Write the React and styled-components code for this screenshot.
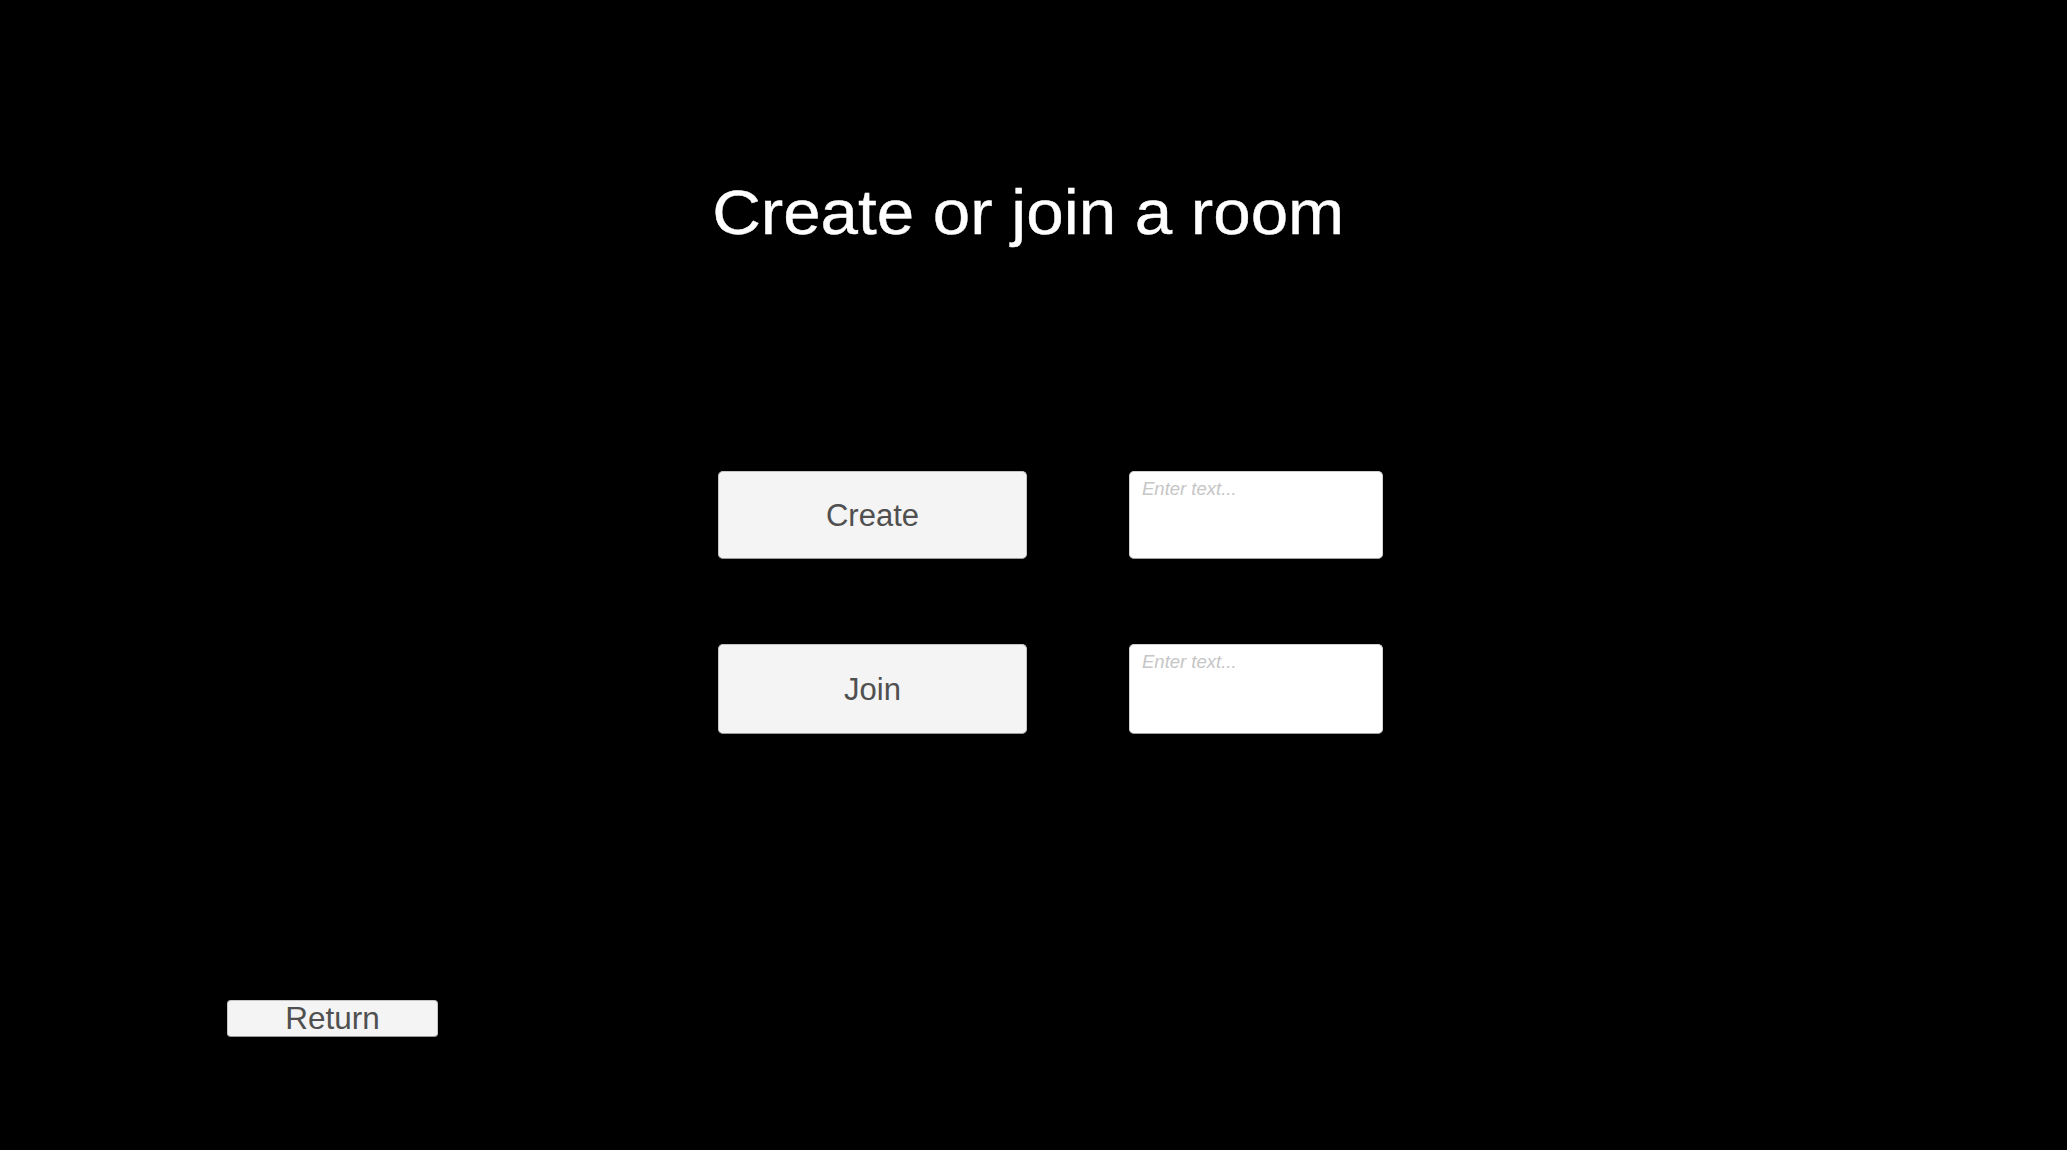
import React from "react";
import styled, { createGlobalStyle } from "styled-components";

const Global = createGlobalStyle`
  html, body { margin: 0; padding: 0; background: #000; }
  body { font-family: "Liberation Sans", Arial, sans-serif; }
  * { box-sizing: border-box; }
`;

const Page = styled.main`
  width: 100vw;
  height: 100vh;
  background: #000;
  display: flex;
  flex-direction: column;
  overflow: hidden;
`;

const Title = styled.h1`
  margin: 181px 0 0;
  font-family: "Liberation Sans", Arial, sans-serif;
  font-weight: 400;
  font-size: 63px;
  line-height: 63px;
  color: #fff;
  text-align: center;
  transform: scaleX(1.068);
  padding-right: 10px;
  -webkit-text-stroke: 0.4px #fff;
`;

const Grid = styled.div`
  margin: 227px 0 0 718px;
  display: grid;
  grid-template-columns: 309px 254px;
  grid-template-rows: 88px 90px;
  column-gap: 102px;
  row-gap: 85px;
`;

const Button = styled.button`
  width: ${(p) => p.$w || "100%"};
  height: ${(p) => p.$h || "100%"};
  margin: 0;
  padding: 0;
  background: #f4f4f4;
  border: 1px solid #c4c4c4;
  border-bottom-color: #9a9a9a;
  border-radius: ${(p) => p.$r || "5px"};
  color: #505050;
  font-family: "Liberation Sans", Arial, sans-serif;
  font-size: ${(p) => p.$fs || "31px"};
  line-height: 1;
  display: flex;
  align-items: center;
  justify-content: center;
  cursor: pointer;
`;

const TextBox = styled.textarea`
  width: 100%;
  height: 100%;
  margin: 0;
  resize: none;
  background: #fff;
  border: 1px solid #d0d0d0;
  border-bottom-color: #a0a0a0;
  border-radius: 5px;
  padding: 6px 12px;
  font-family: "Liberation Sans", Arial, sans-serif;
  font-size: 18.5px;
  line-height: 21px;
  color: #333;
  outline: none;
  &::placeholder {
    color: #c6c6c6;
    font-style: italic;
  }
`;

const Footer = styled.div`
  margin: 266px 0 0 227px;
  display: flex;
`;

export default function App() {
  return (
    <>
      <Global />
      <Page>
        <Title>Create or join a room</Title>
        <Grid>
          <Button>Create</Button>
          <TextBox placeholder="Enter text..." />
          <Button>Join</Button>
          <TextBox placeholder="Enter text..." />
        </Grid>
        <Footer>
          <Button $w="211px" $h="37px" $fs="31.5px" $r="4px">Return</Button>
        </Footer>
      </Page>
    </>
  );
}
